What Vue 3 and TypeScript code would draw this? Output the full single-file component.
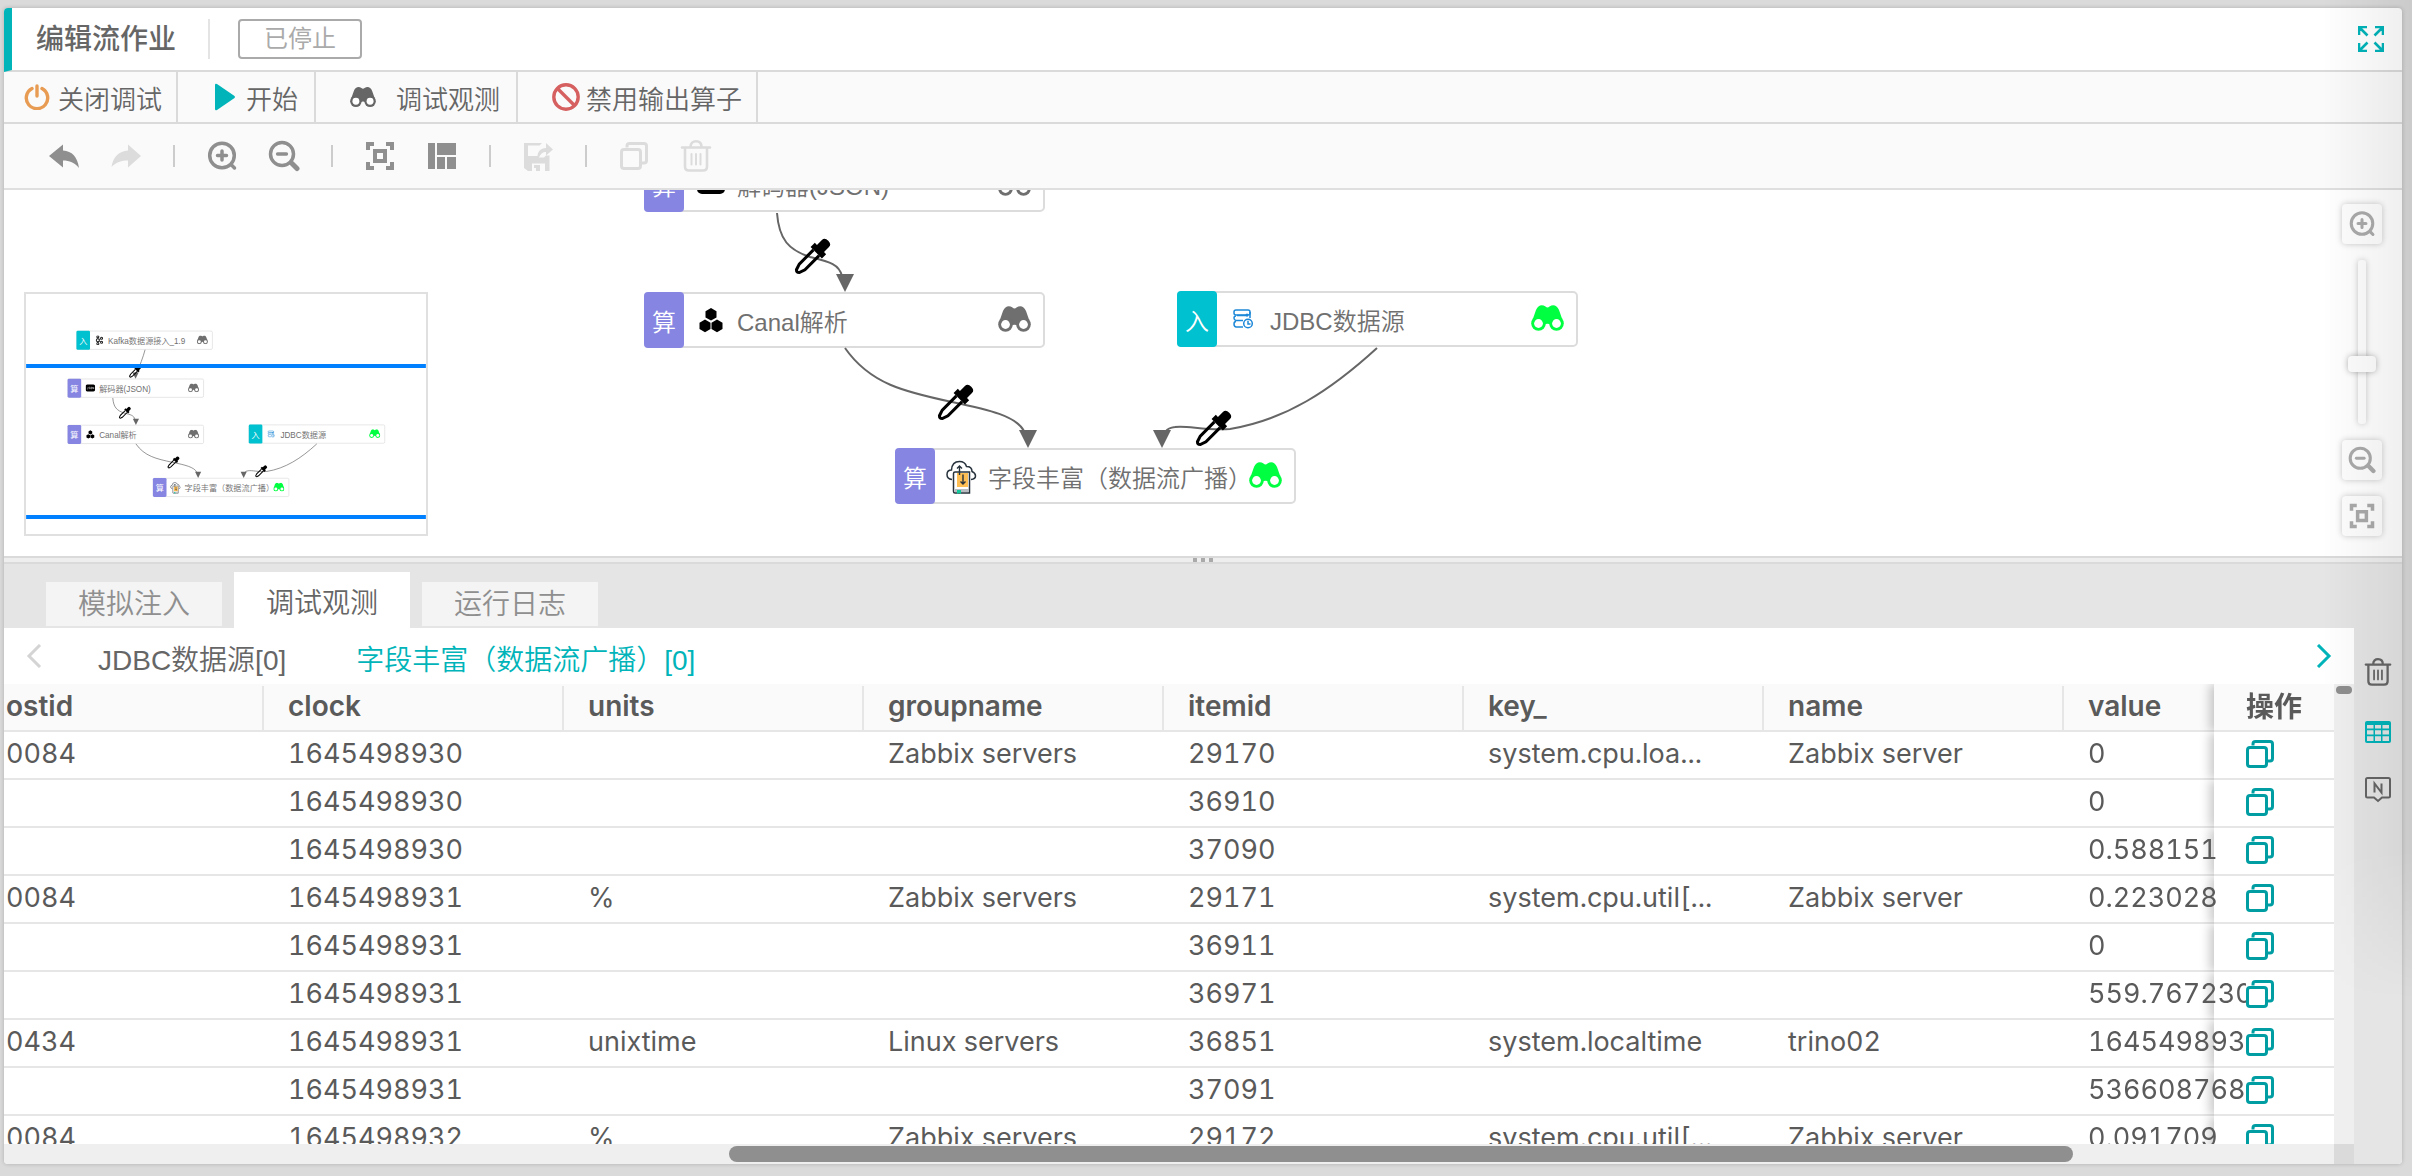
<script setup lang="ts">
import { ref } from 'vue'

interface FlowNode { id: string; x: number; y: number; kind: string; icon: string; label: string; watched: boolean }
interface FlowEdge { path: string; tipX: number; tipY: number; dropX: number; dropY: number }
interface Row { host: string; clock: string; units: string; group: string; item: string; key: string; name: string; value: string }

const nodes: FlowNode[] = [
  { id: 'kafka', x: 666, y: -175, kind: '入', icon: 'kafka', label: 'Kafka数据源接入_1.9', watched: false },
  { id: 'json', x: 640, y: -34, kind: '算', icon: 'json', label: '解码器(JSON)', watched: false },
  { id: 'canal', x: 640, y: 102, kind: '算', icon: 'canal', label: 'Canal解析', watched: false },
  { id: 'jdbc', x: 1173, y: 101, kind: '入', icon: 'jdbc', label: 'JDBC数据源', watched: true },
  { id: 'enrich', x: 891, y: 258, kind: '算', icon: 'enrich', label: '字段丰富（数据流广播）', watched: true },
]

const edges: FlowEdge[] = [
  { path: 'M868 -119 C862 -96 852 -72 844 -52', tipX: 840, tipY: -34, dropX: 838, dropY: -54 },
  { path: 'M773 23 C775 50 785 60 806 67 C826 72 835 74 838 86', tipX: 841, tipY: 102, dropX: 808, dropY: 67 },
  { path: 'M841 158 C866 194 901 202 948 212 C986 220 1012 226 1020 241', tipX: 1024, tipY: 258, dropX: 951, dropY: 213 },
  { path: 'M1373 158 C1326 201 1281 230 1226 239 C1201 241 1183 235 1171 237 Q1164 238 1162 241', tipX: 1158, tipY: 258, dropX: 1209, dropY: 239 },
]

const views = [
  { name: 'stage', box: undefined, nodes: nodes.slice(1), edges: edges.slice(1) },
  { name: 'map', box: '518 -283 1176 706', nodes, edges },
]

const columns = ['ostid', 'clock', 'units', 'groupname', 'itemid', 'key_', 'name', 'value']

const row = (host: string, clock: string, units: string, group: string, item: string, key: string, name: string, value: string): Row =>
  ({ host, clock, units, group, item, key, name, value })

const rows: Row[] = [
  row('0084', '1645498930', '', 'Zabbix servers', '29170', 'system.cpu.loa...', 'Zabbix server', '0'),
  row('', '1645498930', '', '', '36910', '', '', '0'),
  row('', '1645498930', '', '', '37090', '', '', '0.588151'),
  row('0084', '1645498931', '%', 'Zabbix servers', '29171', 'system.cpu.util[...', 'Zabbix server', '0.223028'),
  row('', '1645498931', '', '', '36911', '', '', '0'),
  row('', '1645498931', '', '', '36971', '', '', '559.767230'),
  row('0434', '1645498931', 'unixtime', 'Linux servers', '36851', 'system.localtime', 'trino02', '1645498931'),
  row('', '1645498931', '', '', '37091', '', '', '5366087680'),
  row('0084', '1645498932', '%', 'Zabbix servers', '29172', 'system.cpu.util[...', 'Zabbix server', '0.091709'),
]

const tools = [
  { icon: 'undo', label: '撤销', off: false },
  { icon: 'redo', label: '重做', off: true },
  null,
  { icon: 'zoom-in', label: '放大', off: false },
  { icon: 'zoom-out', label: '缩小', off: false },
  null,
  { icon: 'fit', label: '适应画布', off: false },
  { icon: 'layout', label: '自动布局', off: false },
  null,
  { icon: 'save', label: '保存', off: true },
  null,
  { icon: 'copy', label: '复制', off: true },
  { icon: 'trash', label: '删除', off: true },
]

const tabs = ['模拟注入', '调试观测', '运行日志']
const activeTab = ref(1)
const sources = ['JDBC数据源[0]', '字段丰富（数据流广播）[0]']
const activeSource = ref(1)
const zoom = ref(35)
</script>

<template>
  <svg class="sprite" aria-hidden="true">
    <symbol id="undo" viewBox="0 0 32 32"><path d="M1 16 15 4.500V10.500C24 11 29.500 17 31 28 26.500 22.500 21.500 20.500 15 20.500V27.500Z" /></symbol>
    <symbol id="redo" viewBox="0 0 32 32"><path d="M31 16 18 4.500V10.500C9 11 3 17 1.500 27 6 22 11.500 20.500 18 20.500V27.500Z" /></symbol>
    <symbol id="zoom-in" viewBox="0 0 32 32">
      <g fill="none" stroke="currentColor" stroke-width="3.500" stroke-linecap="round"><circle cx="16" cy="15.500" r="12.300" /><path d="M11.500 15.500h9M16 11v9M25.500 25l3 3" /></g>
    </symbol>
    <symbol id="zoom-out" viewBox="0 0 32 32">
      <g fill="none" stroke="currentColor" stroke-linecap="round"><circle cx="14" cy="14" r="11.500" stroke-width="3.500" /><path d="M9.500 14h9" stroke-width="3.300" /><path d="M24 23.500l5 5" stroke-width="5" /></g>
    </symbol>
    <symbol id="fit" viewBox="0 0 32 32">
      <path d="M2 2h8v4H6v4H2zM22 2h8v8h-4V6h-4zM2 22h4v4h4v4H2zM26 22h4v8h-8v-4h4zM9 9h14v14H9zM13 13v6h6v-6z" fill-rule="evenodd" />
    </symbol>
    <symbol id="layout" viewBox="0 0 32 32"><path d="M2 3h7v26H2zM11 3h19v12H11zM11 17h8v12h-8zM21 17h9v12h-9z" /></symbol>
    <symbol id="save" viewBox="0 0 32 32">
      <path d="M2 3H20L17.500 5.500H6V16H15.500C16 11 18.500 8.500 24 8V3L31 9.500 24 15.500V12C20.500 12 19 13.500 17 17.500H22L24 15.500H27.500V31H23V23.500H10V31H6L2 28ZM12 25h6v6h-4v-3h-2z" fill-rule="evenodd" />
    </symbol>
    <symbol id="copy" viewBox="0 0 32 32">
      <g fill="none" stroke="currentColor" stroke-width="3"><rect x="3.500" y="9.500" width="19" height="19" rx="2.500" /><path d="M9 7.500V6Q9 3.500 11.500 3.500H26Q28.500 3.500 28.500 6V20.500Q28.500 23 26 23H24" /></g>
    </symbol>
    <symbol id="trash" viewBox="0 0 32 32">
      <g fill="none" stroke="currentColor" stroke-width="2.600" stroke-linecap="round"><path d="M2 7.500H30M10.500 7C10.500 3 13 1.300 16 1.300S21.500 3 21.500 7M5 8V26.500Q5 30.500 9 30.500H23Q27 30.500 27 26.500V8" /><path d="M11.500 14V24.500M16 14V24.500M20.500 14V24.500" stroke-width="2" /></g>
    </symbol>
    <symbol id="binoculars" viewBox="0 0 33 26">
      <path d="M1.500 15 5 5C7 0 11-1 14.500 1.500Q16.500 3.500 18.500 1.500C22-1 26 0 28 5L31.500 15 20 20Q16.500 17.500 13 20Z" />
      <circle cx="7.500" cy="18.500" r="7.300" /><circle cx="25.500" cy="18.500" r="7.300" />
      <circle cx="7.500" cy="18.500" r="4.400" fill="#fff" /><circle cx="25.500" cy="18.500" r="4.400" fill="#fff" />
    </symbol>
    <symbol id="power" viewBox="0 0 26 26">
      <g fill="none" stroke="currentColor" stroke-width="3.400" stroke-linecap="round"><path d="M8 4.500A10.700 10.700 0 1 0 18 4.500" /><path d="M13 2V12" /></g>
    </symbol>
    <symbol id="play" viewBox="0 0 22 28"><path d="M1 2Q1 0 3 1L20.500 13Q21.500 14 20.500 15L3 27Q1 28 1 26Z" /></symbol>
    <symbol id="ban" viewBox="0 0 28 28"><g fill="none" stroke="currentColor" stroke-width="3.400"><circle cx="14" cy="14" r="12.200" /><path d="M5.500 5.500 22.500 22.500" /></g></symbol>
    <symbol id="full" viewBox="0 0 26 26">
      <path d="M1 9V1H9M1 1 9.500 9.500M17 1H25V9M25 1 16.500 9.500M1 17V25H9M1 25 9.500 16.500M25 17V25H17M25 25 16.500 16.500" fill="none" stroke="currentColor" stroke-width="2.600" />
    </symbol>
    <symbol id="grid" viewBox="0 0 26 22">
      <rect width="26" height="22" rx="2" /><path d="M2 4h6.500v3.500H2zM10 4h6v3.500h-6zM17.500 4H24v3.500h-6.500zM2 9.200h6.500v4.300H2zM10 9.200h6v4.300h-6zM17.500 9.200H24v4.300h-6.500zM2 15.200h6.500V20H2zM10 15.200h6V20h-6zM17.500 15.200H24V20h-6.500z" fill="#e4e4e4" />
    </symbol>
    <symbol id="note" viewBox="0 0 26 26">
      <g fill="none" stroke="currentColor" stroke-width="2"><path d="M1 2.500Q1 1 2.500 1H23.500Q25 1 25 2.500V19Q25 20.500 23.500 20.500H17L13 24 9 20.500H2.500Q1 20.500 1 19Z" /><path d="M9.500 15.500V6.500L16.500 15.500V6.500" /></g>
    </symbol>
    <symbol id="canal" viewBox="0 0 28 28">
      <path d="M14 2l5.500 3.200v6.200L14 14.600 8.500 11.400V5.200ZM8 13.500l5.500 3.200V23L8 26.200 2.500 23V16.700ZM20 13.500l5.500 3.200V23L20 26.200 14.500 23V16.700Z" fill="#000" />
    </symbol>
    <symbol id="json" viewBox="0 0 28 28">
      <rect y="3" width="28" height="21" rx="5" fill="#000" />
      <path d="M4 16q3 2 3-1v-4M13 11q-3-1-3 1t3 2-3 2M18 11v5h-2.500v-5zM21 16v-5l3 5v-5" fill="none" stroke="#fff" stroke-width="1.200" />
    </symbol>
    <symbol id="kafka" viewBox="0 0 28 28">
      <path d="M10 4V24M10 14 21 8M10 14 21 20" stroke="#222" stroke-width="2.500" />
      <g fill="#fff" stroke="#222" stroke-width="3"><circle cx="10" cy="4" r="3" /><circle cx="10" cy="14" r="4.500" /><circle cx="10" cy="24" r="3" /><circle cx="21" cy="8" r="3" /><circle cx="21" cy="20" r="3" /></g>
    </symbol>
    <symbol id="jdbc" viewBox="0 0 28 28">
      <g fill="none" stroke="#1e88d8" stroke-width="1.500"><rect x="4" y="5" width="16" height="5" rx="2" /><path d="M7 10.500H18M6 11Q4 11 4 13T6 15.500H13M6 16.500Q4 16.500 4 19T6 22H13M20 7V13" /><circle cx="18" cy="18.500" r="4.300" /><path d="M18 15.800V19H20.500" /></g>
      <circle cx="17" cy="10" r="1.500" fill="#1e88d8" />
    </symbol>
    <symbol id="enrich" viewBox="0 0 32 36">
      <path d="M7 20.500Q2 20 2 15.500T6.500 11Q7 2.500 14.500 2.500Q20 2.500 21.500 7.500Q27 7.500 27 12.500Q30.500 14 30.500 17T26 20.500" fill="#fff" stroke="#27323c" stroke-width="1.500" />
      <path d="M8.500 14.500Q8.500 13 10 13H24.500V34H10Q8.500 34 8.500 32.500Z" fill="#fff" stroke="#27323c" stroke-width="1.500" />
      <path d="M12 14H23V28H12Z" fill="#ffbf55" /><path d="M10 30H24V33H10Z" fill="#b7bcc0" /><path d="M12 31h4v4l-2-1-2 1z" fill="#12c99b" />
      <path d="M14.500 16V7M12 9.500 14.500 7 17 9.500M18 15.500V25M15.500 22.500 18 25 20.500 22.500" fill="none" stroke="#27323c" stroke-width="1.400" />
    </symbol>
    <symbol id="prev" viewBox="0 0 16 24"><path d="M14 1 3 12 14 23" fill="none" stroke="currentColor" stroke-width="3" /></symbol>
    <symbol id="next" viewBox="0 0 16 24"><path d="M2 1 13 12 2 23" fill="none" stroke="currentColor" stroke-width="3" /></symbol>
  </svg>

  <div class="page">
    <main class="shell">
      <header class="title-bar">
        <h1>编辑流作业</h1>
        <span class="rule"></span>
        <span class="status">已停止</span>
        <button class="full" aria-label="全屏"><svg width="26" height="26"><use href="#full" /></svg></button>
      </header>

      <nav class="actions">
        <button class="close"><svg width="26" height="26" class="orange"><use href="#power" /></svg>关闭调试</button>
        <button class="start"><svg width="22" height="28" class="teal"><use href="#play" /></svg>开始</button>
        <button class="watch"><svg width="26" height="22"><use href="#binoculars" /></svg>调试观测</button>
        <button class="ban"><svg width="28" height="28" class="red"><use href="#ban" /></svg>禁用输出算子</button>
      </nav>

      <div class="tools">
        <template v-for="(tool, i) in tools" :key="i">
          <button v-if="tool" :disabled="tool.off" :aria-label="tool.label"><svg width="32" height="32"><use :href="'#' + tool.icon" /></svg></button>
          <span v-else class="sep"></span>
        </template>
      </div>

      <section class="canvas">
        <svg v-for="view in views" :key="view.name" :class="view.name" :viewBox="view.box">
          <g v-for="node in view.nodes" :key="node.id" :transform="`translate(${node.x} ${node.y})`">
            <rect x="1" y="1" width="399" height="54" rx="4" class="node-box" />
            <rect width="40" height="56" rx="4" :class="node.kind === '入' ? 'badge-in' : 'badge-op'" />
            <text x="20" y="39" text-anchor="middle" class="badge-text">{{ node.kind }}</text>
            <use :href="'#' + node.icon" :x="node.icon === 'enrich' ? 50 : 53" :y="node.icon === 'enrich' ? 11 : 14" :width="node.icon === 'enrich' ? 32 : 28" :height="node.icon === 'enrich' ? 36 : 28" />
            <text x="93" y="39" class="node-text">{{ node.label }}</text>
            <use href="#binoculars" x="354" y="14" width="33" height="26" :class="node.watched ? 'seen' : 'unseen'" />
          </g>
          <g v-for="edge in view.edges" :key="edge.path">
            <path :d="edge.path" class="edge" />
            <path :d="`M${edge.tipX - 9} ${edge.tipY - 18}h18l-9 18z`" class="tip" />
            <g :transform="`translate(${edge.dropX} ${edge.dropY}) rotate(45)`">
              <path d="M-4-6V14L-2 20Q0 22 2 20L4 14V-6" class="glass" />
              <path d="M-5-19Q-5-23 0-23T5-19V-12H8V-6H-8V-12H-5Z" />
            </g>
          </g>
          <path v-if="view.box" d="M518 -71H1694M518 373H1694" class="frame" />
        </svg>

        <div class="zoomer">
          <button aria-label="放大画布"><svg width="28" height="28"><use href="#zoom-in" /></svg></button>
          <input v-model="zoom" type="range" min="0" max="100" aria-label="缩放比例" />
          <button aria-label="缩小画布"><svg width="28" height="28"><use href="#zoom-out" /></svg></button>
          <button aria-label="适应窗口"><svg width="28" height="28"><use href="#fit" /></svg></button>
        </div>
      </section>

      <div class="splitter"><i></i><i></i><i></i></div>

      <div class="tabs" role="tablist">
        <button v-for="(tab, i) in tabs" :key="tab" role="tab" :aria-selected="i === activeTab" :class="{ active: i === activeTab }" @click="activeTab = i">{{ tab }}</button>
      </div>

      <section class="bottom">
        <div class="data">
          <div class="sources">
            <button class="prev" aria-label="上一个"><svg width="16" height="24"><use href="#prev" /></svg></button>
            <button v-for="(source, i) in sources" :key="source" class="source" :class="{ active: i === activeSource }" @click="activeSource = i">{{ source }}</button>
            <button class="next" aria-label="下一个"><svg width="16" height="24"><use href="#next" /></svg></button>
          </div>
          <div class="grid-area">
            <div class="viewport">
              <table>
                <colgroup><col class="col-first" /><col v-for="n in 7" :key="n" class="col" /><col class="col-op" /></colgroup>
                <thead>
                  <tr><th v-for="column in columns" :key="column"><span>{{ column }}</span></th><th class="op">操作</th></tr>
                </thead>
                <tbody>
                  <tr v-for="(r, i) in rows" :key="i">
                    <td>{{ r.host }}</td><td>{{ r.clock }}</td><td>{{ r.units }}</td><td>{{ r.group }}</td><td>{{ r.item }}</td><td>{{ r.key }}</td><td>{{ r.name }}</td>
                    <td><span class="value">{{ r.value }}</span></td>
                    <td class="op"><button aria-label="复制"><svg width="32" height="32"><use href="#copy" /></svg></button></td>
                  </tr>
                </tbody>
              </table>
            </div>
            <div class="vbar"><i></i></div>
            <div class="hbar"><i></i></div>
            <div class="corner"></div>
          </div>
        </div>
        <aside class="rail">
          <button aria-label="清空"><svg width="28" height="30"><use href="#trash" /></svg></button>
          <button aria-label="表格" class="teal"><svg width="26" height="22"><use href="#grid" /></svg></button>
          <button aria-label="备注"><svg width="26" height="26"><use href="#note" /></svg></button>
        </aside>
      </section>
    </main>
    <div class="shade"></div>
  </div>
</template>

<style>
body { margin: 0; background: #dadada; }
</style>

<style scoped>
.page {
  box-sizing: border-box;
  height: 100vh;
  padding: 8px 10px 12px 4px;
  position: relative;
  overflow: hidden;
  font-family: "Liberation Sans", "Noto Sans CJK SC", sans-serif;
  color: #666;
}
.sprite { position: absolute; width: 0; height: 0; }
svg { display: block; fill: currentColor; flex: none; }
button { font: inherit; color: inherit; background: none; border: 0; padding: 0; margin: 0; white-space: nowrap; }
.teal { color: #00b4b9; }
.orange { color: #e89c53; }
.red { color: #d66060; }

.shell {
  height: 100%;
  display: flex;
  flex-direction: column;
  background: #fff;
  border-radius: 4px;
  overflow: hidden;
  box-shadow: 0 0 4px rgba(0, 0, 0, .2);
}
.title-bar { display: flex; align-items: center; flex: none; height: 62px; padding: 0 18px 0 24px; border-left: 8px solid #00b4b9; border-bottom: 2px solid #dadada; }
h1 { margin: 0; padding-top: 2px; font-size: 28px; font-weight: 500; line-height: 40px; }
.rule { width: 2px; height: 40px; margin: 0 28px 0 32px; background: #e4e4e4; }
.status { box-sizing: border-box; width: 124px; height: 40px; border: 2px solid #aaa; border-radius: 4px; color: #aaa; font-size: 24px; line-height: 36px; text-align: center; }
.full { margin-left: auto; color: #00b4b9; }

.actions { display: flex; flex: none; height: 50px; background: #fafafa; border-bottom: 2px solid #dadada; font-size: 26px; font-weight: 350; }
.actions button { display: flex; align-items: center; border-right: 2px solid #dadada; }
.close { padding: 0 14px 0 20px; gap: 8px; }
.start { padding: 0 16px 0 36px; gap: 10px; }
.watch { padding: 0 16px 0 34px; gap: 20px; }
.ban { padding: 0 14px 0 34px; gap: 6px; }

.tools { display: flex; align-items: center; flex: none; gap: 30px; height: 64px; padding: 0 44px; background: #fafafa; border-bottom: 2px solid #dfdfdf; color: #8f8f8f; }
.tools button:disabled { color: #dcdcdc; }
.sep { width: 2px; height: 22px; margin: 0 1px; background: #ccc; }

.canvas { position: relative; flex: none; height: 366px; background: #fff; overflow: hidden; }
.stage { width: 100%; height: 100%; }
.map { position: absolute; left: 20px; top: 102px; width: 400px; height: 240px; border: 2px solid #e0e0e0; background: #fff; }
.node-box { fill: #fff; stroke: #dcdcdc; stroke-width: 2; }
.badge-in { fill: #00c1cf; }
.badge-op { fill: #8686e2; }
.badge-text { fill: #fff; font-size: 24px; font-weight: 350; }
.node-text { fill: #707070; font-size: 24px; font-weight: 350; }
.seen { color: #00ff40; }
.unseen { color: #6f6f6f; }
.edge { fill: none; stroke: #666; stroke-width: 2; }
.tip { fill: #666; }
.stage g g, .map g g { fill: #000; }
.glass { fill: none; stroke: #000; stroke-width: 3; }
.frame { fill: none; stroke: #0080ff; stroke-width: 12; }

.zoomer { position: absolute; right: 20px; top: 14px; width: 40px; display: flex; flex-direction: column; align-items: center; gap: 16px; }
.zoomer button { width: 40px; height: 40px; display: grid; place-items: center; color: #aaa; background: #fdfdfd; border-radius: 4px; box-shadow: 0 0 6px rgba(0, 0, 0, .22); }
.zoomer input { appearance: none; writing-mode: vertical-lr; direction: rtl; width: 28px; height: 164px; margin: 0; background: none; }
.zoomer input::-webkit-slider-runnable-track { width: 8px; height: 164px; margin: 0 10px; background: #fdfdfd; border-radius: 3px; box-shadow: 0 0 6px rgba(0, 0, 0, .22); }
.zoomer input::-webkit-slider-thumb { appearance: none; width: 28px; height: 16px; margin-left: -10px; background: #fdfdfd; border-radius: 4px; box-shadow: 0 0 6px rgba(0, 0, 0, .3); }

.splitter { flex: none; display: flex; justify-content: center; gap: 4px; height: 4px; background: #eee; border: solid #dadada; border-width: 2px 0; }
.splitter i { width: 4px; height: 4px; background: #aaa; }

.tabs { flex: none; display: flex; align-items: flex-end; gap: 12px; height: 64px; padding-left: 42px; background: #e5e5e5; font-size: 28px; font-weight: 350; }
.tabs button { width: 176px; height: 44px; margin-bottom: 2px; padding-bottom: 4px; background: #f4f4f4; color: #8f8f8f; }
.tabs .active { height: 56px; margin: 0; padding: 2px 0 0; background: #fff; color: #666; }

.bottom { display: flex; flex: 1; min-height: 0; }
.data { flex: 1; min-width: 0; display: flex; flex-direction: column; }
.sources { display: flex; align-items: center; flex: none; height: 56px; padding: 0 22px; font-size: 28px; font-weight: 350; }
.sources .prev { margin: 0 56px 0 0; color: #d4d4d4; }
.source { line-height: 40px; margin: 10px 70px 0 0; }
.source.active { color: #00b4b9; }
.sources .next { margin-left: auto; color: #00b4b9; }

.grid-area { flex: 1; min-height: 0; display: grid; grid-template: minmax(0, 1fr) 20px / minmax(0, 1fr) 20px; }
.viewport { overflow: hidden; }
table { table-layout: fixed; width: 2480px; border-collapse: separate; border-spacing: 0; color: #5a5a5a; font-family: Inter, "Noto Sans CJK SC", sans-serif; font-size: 27px; font-variant-numeric: tabular-nums; }
.col-first { width: 260px; }
.col { width: 300px; }
.col-op { width: 120px; }
th, td { box-sizing: border-box; height: 48px; padding: 0 0 2px 24px; line-height: 32px; text-align: left; white-space: nowrap; vertical-align: middle; border-bottom: 2px solid #e6e6e6; }
th:first-child, td:first-child { padding-left: 2px; }
th { background: #fafafa; font-size: 28px; font-weight: 600; padding: 0; }
th span { display: block; height: 44px; line-height: 40px; margin-top: 2px; padding-left: 24px; border-right: 2px solid #e6e6e6; box-sizing: border-box; }
th:first-child span { padding-left: 0; }
.value { position: relative; z-index: 2; display: block; width: 158px; overflow: hidden; }
.op { position: sticky; right: 0; z-index: 1; background: #fff; padding-left: 30px; box-shadow: -4px 0 10px rgba(0, 0, 0, .22); clip-path: inset(0 0 0 -16px); }
th.op { background: #fafafa; padding-left: 32px; }
.op button { display: block; color: #009ea3; background: #fff; }
.vbar { background: #efefef; padding: 2px; }
.vbar i { display: block; height: 8px; border-radius: 5px; background: #8f8f8f; }
.hbar { background: #efefef; padding: 2px 0; }
.hbar i { display: block; width: 57.7%; height: 16px; margin-left: 31.1%; border-radius: 8px; background: #8f8f8f; }
.corner { background: #dadada; }
.rail { flex: none; width: 48px; display: flex; flex-direction: column; align-items: center; gap: 34px; padding-top: 29px; box-sizing: border-box; background: #e5e5e5; }

.shade {
  position: absolute;
  top: 0;
  right: 0;
  width: 90px;
  height: 1000px;
  background: linear-gradient(to right, transparent, rgba(0, 0, 0, .065));
  mask-image: linear-gradient(#000 85%, transparent);
  pointer-events: none;
}
</style>
